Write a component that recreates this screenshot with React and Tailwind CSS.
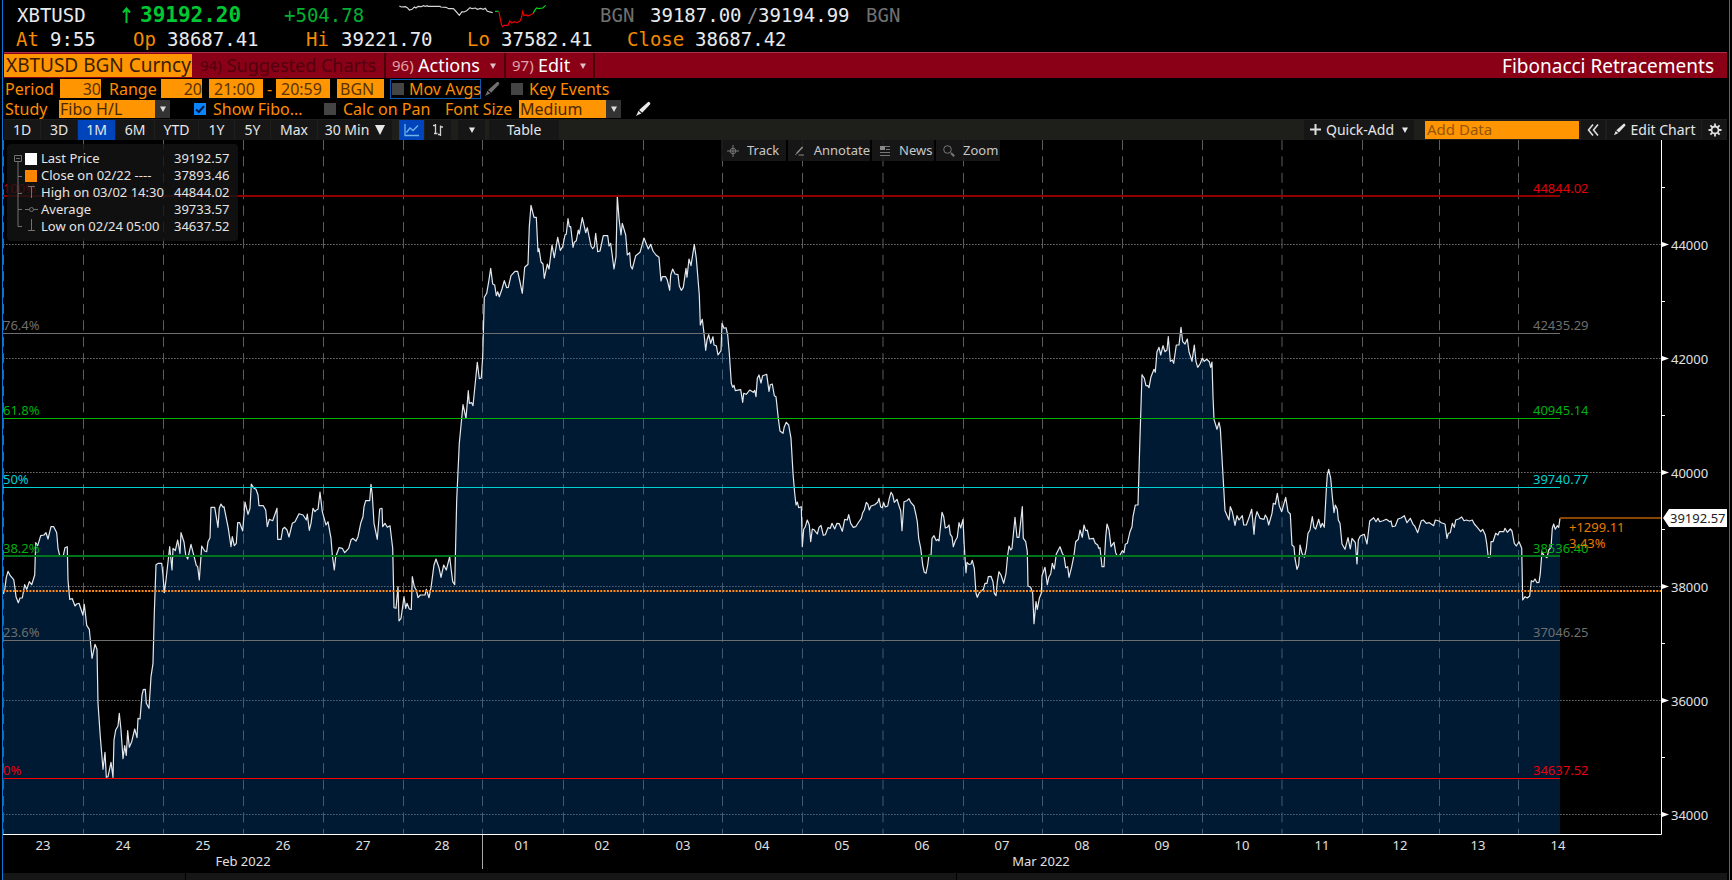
import React from "react";

const SEGMENTS = [
  {
    x: 0,
    y: 440,
    points:
      "10,462 14,450 19,412 24,394 31,407 41,419 45,445 48,470 55,488 60,474 67,474 74,434 80,448 88,425 95,434 104,405 107,308 113,317 122,287 132,285 138,278 144,297 153,260 161,260 170,278 174,325 179,347 190,347 195,323 202,320 204,420 209,478 217,476 225,498 230,492 237,490 249,526 253,493 260,556 268,568 276,655 285,613 291,628 294,790 301,890 309,988 315,937 319,1012 324,1010 333,967 339,1012 342,900 347,870 354,858 358,820 363,870 369,956 374,917 379,946 383,872 388,922 395,905 404,867 411,893 414,835 420,837 426,765 430,749 436,748 439,790 447,805 453,710 459,670 463,520 468,374 475,370 485,370 489,405 493,458 498,420 509,320 516,390 519,325 526,332 533,300 540,340 543,278 552,306 557,345 563,357 573,313 583,352 589,376 593,380 598,420 605,318 614,333 620,335 624,305 630,293 633,202 644,202 654,262 658,205 663,192 669,202 672,200 685,265 693,320 697,290 703,317 709,310 713,248 719,248 728,273 735,186 744,223 750,205 754,132 762,145 768,148 774,165 777,197 790,197 797,210 802,260 808,238 818,242 831,205 833,298 843,298 848,267 854,262 861,270 867,291 877,250 885,245 897,221 909,225 919,240 922,222 928,271 933,250 939,205 945,215 949,210 954,208 960,156 967,215 978,255 984,245 993,295 997,345 1003,390 1007,350 1017,323 1027,325 1034,338 1046,325 1053,300 1058,295 1068,303 1074,290 1082,250 1089,230 1092,200 1097,182 1109,182 1113,133 1117,165 1122,250 1132,298 1139,207 1146,205 1148,260 1155,250 1162,262 1170,257 1178,325 1182,503 1188,505 1194,440 1197,543 1203,535 1212,470 1217,505 1221,490 1228,507 1234,508 1237,410 1243,440 1249,450 1254,473 1261,465 1275,465 1279,448 1287,473 1293,443 1302,375",
  },
  {
    x: 430,
    y: 180,
    points:
      "18,1137 27,1163 33,1192 41,1155 49,1170 59,1130 63,1165 68,1205 74,1214 80,960 88,790 95,715 99,674 108,715 115,632 118,670 125,668 129,677 142,547 148,596 154,594 158,530 163,352 170,340 176,305 182,265 188,312 194,315 199,347 203,335 208,350 216,327 223,302 230,323 235,322 243,287 255,274 263,274 270,306 277,340 284,262 294,253 298,140 303,76 312,112 319,112 324,215 327,206 333,246 339,252 343,295 352,252 357,267 366,195 373,233 383,172 391,211 398,200 405,165 409,162 414,116 418,140 422,140 429,202 433,187 439,182 445,150 448,162 457,113 467,158 472,143 483,198 488,206 493,200 497,160 503,215 510,213 520,167 533,167 537,198 542,190 552,267 558,230 562,48 567,115 573,165 577,130 587,165 592,225 599,218 602,258 607,267 617,227 630,217 642,174 655,207 662,193 669,213 678,225 687,232 693,303 697,290 707,290 712,300 719,331 722,285 728,267 735,282 744,284 748,318 754,331 760,322 768,265 771,292 777,237 783,257 793,193 799,235 808,345 811,435 817,418 822,460 827,511 831,480 836,464 842,490 849,470 852,495 859,497 864,525 873,512 876,430 882,445 888,443 893,465 898,520 904,610 908,622 912,616 916,632 932,629 938,667 941,640 949,643 959,630 970,637 974,631 978,650 982,595 987,585 993,609 998,587 1010,583 1017,634 1021,614 1027,612 1033,647 1038,650 1045,715 1050,753 1059,760 1063,740 1069,727 1076,735 1083,775 1089,880 1094,940 1098,975 1102,966 1106,983 1114,980 1117,1100 1121,1048 1126,1040 1132,1020 1138,1035 1142,1085 1147,1047 1152,1049 1162,1062 1167,1042 1173,1036 1180,1066 1186,1064 1194,1043 1201,1045 1206,1030 1214,1047 1221,1030 1228,1031 1237,1054 1244,1018 1252,1020 1256,1004 1262,1030 1270,1042 1277,1040 1286,1026 1294,1015 1298,998 1303,990 1309,967 1314,973 1318,990",
  },
  {
    x: 860,
    y: 300,
    points:
      "33,618 44,614 53,607 57,595 62,621 67,623 71,608 76,621 83,618 88,595 93,577 98,585 103,607 111,598 118,620 122,632 126,692 132,605 141,602 147,596 153,608 162,618 168,645 172,665 176,715 182,745 188,795 193,817 198,820 203,795 207,765 213,767 216,715 222,707 229,722 233,718 237,723 246,637 251,650 256,684 262,682 267,675 271,703 276,710 280,740 286,722 292,712 297,668 302,684 309,658 313,740 318,818 321,787 327,793 333,792 337,781 343,805 348,880 352,892 358,878 370,868 375,850 381,850 385,830 393,829 399,845 403,880 408,887 412,845 417,815 423,825 431,850 438,820 443,765 447,738 452,750 456,745 465,652 471,712 477,712 487,620 490,715 497,725 502,755 504,858 512,862 518,880 522,971 528,905 532,928 538,895 544,880 546,827 555,802 562,854 567,830 572,822 577,790 583,807 589,762 600,740 607,760 612,768 617,803 623,800 627,832 635,800 642,765 647,725 655,718 660,690 667,712 672,675 677,692 682,690 688,717 700,715 706,730 713,735 716,745 720,743 726,800 732,800 737,712 741,672 747,690 753,740 762,727 767,758 772,768 780,765 787,752 792,758 796,733 802,730 810,695 816,680 819,650 826,615 834,615 839,440 846,224 853,235 858,257 863,257 867,263 873,230 882,208 886,217 891,155 897,142 902,165 909,137 915,155 921,150 925,110 931,184 937,180 941,190 949,135 957,135 963,82 968,125 975,132 982,117 987,155 996,184 1003,135 1008,185 1013,202 1020,192 1027,175 1033,184 1040,178 1048,185 1052,202 1056,186 1059,290 1062,358 1067,375 1071,388 1077,367 1081,385 1087,490 1095,632 1107,660 1111,620 1117,635 1125,676 1131,647 1137,660 1147,647 1151,675 1159,675 1168,650 1175,628 1182,703 1186,655 1191,635 1200,655 1212,658 1216,645 1221,653 1226,675 1236,640 1240,610 1246,613 1252,580 1258,617 1265,635 1277,592 1284,635 1291,642 1296,735 1302,740 1305,775 1311,808",
  },
  {
    x: 1292,
    y: 440,
    points:
      "20,375 24,315 30,340 37,352 43,325 48,280 54,270 61,230 66,262 71,267 80,238 86,262 91,250 97,262 103,150 106,105 110,88 116,115 121,170 126,218 130,195 136,208 139,240 144,250 150,312 159,328 168,293 175,327 180,295 190,308 195,372 199,300 205,288 217,283 225,312 233,243 245,233 252,245 258,235 263,245 273,242 283,238 293,245 297,243 301,260 310,258 318,237 327,234 337,227 345,248 355,235 363,253 368,258 377,278 388,242 394,240 403,250 412,248 425,257 430,240 441,243 448,248 459,252 465,295 469,280 475,278 481,250 487,262 491,240 500,237 509,231 516,242 523,240 532,243 541,240 547,252 556,262 566,275 572,268 580,285 584,310 589,352 595,350 597,305 603,305 611,280 618,285 622,275 635,275 639,265 646,277 655,267 660,273 667,310 673,318 681,305 689,325 692,480 699,470 706,474 713,468 718,422 724,425 729,417 735,428 741,427 745,400 750,335 755,345 765,353 770,330 777,322 781,265 785,252 790,268 796,257 800,262 804,235",
  },
];

// Segment samples are stored in thirds of a chart unit.
const price = SEGMENTS.flatMap((s) =>
  s.points.split(" ").map((p) => {
    const [px, py] = p.split(",").map(Number);
    return `${(s.x + px / 3).toFixed(1)},${(s.y + py / 3).toFixed(1)}`;
  })
).join(" ");

const DAY_LINES = [3.5, 83.5, 163.5, 243.5, 323.5, 403.5, 482.5, 563.5, 643.5, 722.5, 802.5, 883, 963.5, 1042.5, 1122.5, 1202.5, 1282, 1362.5, 1439.5, 1518.5];
const DAYS = [
  ["23", 43], ["24", 123], ["25", 203], ["26", 283], ["27", 363], ["28", 442], ["01", 522], ["02", 602], ["03", 683], ["04", 762],
  ["05", 842], ["06", 922], ["07", 1002], ["08", 1082], ["09", 1162], ["10", 1242], ["11", 1322], ["12", 1400], ["13", 1478], ["14", 1558],
];
const MAJOR = [["44000", 244.5], ["42000", 358.5], ["40000", 472.5], ["38000", 586.5], ["36000", 700.5], ["34000", 814.5]];
const MINOR = [187.5, 301.5, 415.5, 529.5, 643.5, 757.5];
const FIBS = [
  { pct: "100%", value: "44844.02", y: 196, w: 2, line: "#8f0000", text: "#e0000c" },
  { pct: "76.4%", value: "42435.29", y: 333.5, w: 1, line: "#6e6e6e", text: "#6e6e6e" },
  { pct: "61.8%", value: "40945.14", y: 418.5, w: 1, line: "#00b400", text: "#00b010" },
  { pct: "50%", value: "39740.77", y: 487.5, w: 1, line: "#00d0d0", text: "#00d0d0" },
  { pct: "38.2%", value: "38536.40", y: 556, w: 2, line: "#00751c", text: "#00b010" },
  { pct: "23.6%", value: "37046.25", y: 640.5, w: 1, line: "#6e6e6e", text: "#6e6e6e" },
  { pct: "0%", value: "34637.52", y: 778.5, w: 1, line: "#ff0000", text: "#e8000c" },
];

function Chart() {
  return (
    <svg viewBox="3 140 1726 733" className="block h-auto w-full" fontFamily='"Noto Sans", sans-serif' fontSize="13" role="img" aria-label="XBTUSD price chart">
      {MAJOR.map(([t, y]) => (
        <line key={t} x1="3" x2="1661" y1={y} y2={y} stroke="#666" strokeDasharray="1.7 1.3" />
      ))}
      {DAY_LINES.map((x) => (
        <line key={x} x1={x} x2={x} y1="140" y2="834" stroke="#5c5c5c" strokeDasharray="10 6.4" />
      ))}
      <polygon points={`3.3,834 ${price} 1560,834`} fill="#0057aa" fillOpacity=".3" />
      <polyline points={price} fill="none" stroke="#e4e8ec" strokeWidth="1.2" strokeLinejoin="round" />
      {FIBS.map((f) => (
        <g key={f.pct}>
          <line x1="3" x2="1560" y1={f.y} y2={f.y} stroke={f.line} strokeWidth={f.w} shapeRendering="crispEdges" />
          <text x="3" y={Math.floor(f.y) - 3} fill={f.text}>{f.pct}</text>
          <text x="1533" y={Math.floor(f.y) - 3} fill={f.text}>{f.value}</text>
        </g>
      ))}
      <line x1="3" x2="1661" y1="591" y2="591" stroke="#ff8c1a" strokeWidth="2" strokeDasharray="2 1.3" />
      <line x1="1560" x2="1661" y1="518" y2="518" stroke="#8a4600" strokeWidth="2" />
      <text x="1569" y="532" fill="#e87a00">+1299.11</text>
      <text x="1569" y="548" fill="#e87a00">3.43%</text>
      <path d="M3 834.5H1661.500V140" fill="none" stroke="#fff" />
      <line x1="482.500" x2="482.500" y1="835" y2="869" stroke="#aaa" />
      {MINOR.map((y) => (
        <line key={y} x1="1662" x2="1665" y1={y} y2={y} stroke="#fff" />
      ))}
      {MAJOR.map(([t, y]) => (
        <g key={t}>
          <path d={`M1662 ${y - 2.5}L1669 ${y}L1662 ${y + 2.5}Z`} fill="#fff" />
          <text x="1671" y={y + 5} fill="#e0e0e0">{t}</text>
        </g>
      ))}
      <path d="M1663 518L1669 509H1727V527H1669Z" fill="#fff" />
      <text x="1670" y="523" fill="#222">39192.57</text>
      <g fill="#e0e0e0" textAnchor="middle">
        {DAYS.map(([d, x]) => (
          <text key={d} x={x} y="850">{d}</text>
        ))}
        <text x="243" y="866">Feb 2022</text>
        <text x="1041" y="866">Mar 2022</text>
      </g>
    </svg>
  );
}

function Caret({ className = "" }) {
  return (
    <svg viewBox="0 0 6 6" className={`h-[6px] w-[6px] shrink-0 ${className}`} fill="currentColor" aria-hidden="true">
      <path d="M0 .5h6L3 6z" />
    </svg>
  );
}

function Pencil({ className = "" }) {
  return (
    <svg viewBox="0 0 16 16" className={`shrink-0 ${className}`} fill="currentColor" aria-hidden="true">
      <path d="M12.800 1.200a1.300 1.300 0 0 1 1.800 0l.4.5a1.300 1.300 0 0 1 0 1.700L7.200 11.800 4.100 8.900zM3.400 9.700l3 2.900L2.800 14 1 15.200 2.100 13z" />
    </svg>
  );
}

function Sparkline() {
  return (
    <svg viewBox="27 3 444 75" className="h-[25px] w-[148px]" fill="none" strokeWidth="3.500" aria-hidden="true">
      <path stroke="#d4d4d4" d="M28 12L34 15 46 14 52 17 58 24 66 22 73 15 78 18 84 13 94 14 100 11 106 13 112 11 114 13 150 13 152 15 168 16 176 20 190 20 197 27 208 40 216 29 222 30 230 26 240 17 246 20 256 18 262 22 272 19 280 22 286 19 292 28 308 32" />
      <path stroke="#00d91a" d="M315 28H326" />
      <path stroke="#f00000" d="M327 29L330 48 335 70 338 74 342 70 354 70 359 57 365 63 372 59 380 62 390 57 395 45 398 29 402 41 410 39 414 42 422 38 430 34" />
      <path stroke="#00d91a" d="M430 34L434 25 440 18 446 20 458 18 467 10" />
    </svg>
  );
}

function Select({ id, value, className }) {
  return (
    <span className={`relative flex h-[18px] ${className}`}>
      <select id={id} defaultValue={value} className="h-full w-full appearance-none rounded-none border-0 bg-[#ff9500] p-0 pl-px text-base leading-[18px] text-[#4a2800] outline-none">
        <option>{value}</option>
      </select>
      <span className="pointer-events-none absolute inset-y-0 right-0 flex w-[15px] items-center justify-center bg-[#333] text-[#ddd]">
        <Caret />
      </span>
    </span>
  );
}

function Check({ label, checked = false, gap }) {
  return (
    <label className={`flex items-center whitespace-nowrap ${gap}`}>
      <span className="relative flex h-3 w-3 shrink-0">
        <input type="checkbox" defaultChecked={checked} className="peer h-3 w-3 appearance-none bg-[#444] checked:bg-[#0a84ff]" />
        <svg viewBox="0 0 12 12" className="pointer-events-none absolute inset-0 hidden h-3 w-3 peer-checked:block" fill="none" stroke="#001a40" strokeWidth="2" aria-hidden="true">
          <path d="M2 6.500L4.800 9 10 3.200" />
        </svg>
      </span>
      {label}
    </label>
  );
}

const field = "h-[19px] rounded-none border-0 bg-[#ff9500] p-0 text-base text-[#5a3300] outline-none";
const tabBase = "flex h-[20px] shrink-0 items-center justify-center text-[14px] text-[#e6e6e6]";
const tab = `${tabBase} bg-[#161616]`;
const tabOn = `${tabBase} bg-[#0044bb]`;
const tool = "flex h-[21px] items-center bg-[#181818]/90 text-[13px] text-[#c8c8c8]";

const RANGES = [
  ["1D", "w-[36px]"], ["3D", "w-[36px]"], ["1M", "w-[37px]"], ["6M", "w-[38px]"],
  ["YTD", "w-[43px]"], ["1Y", "w-[35px]"], ["5Y", "w-[35px]"], ["Max", "w-[46px]"],
];

const LEGEND = [
  ["Last Price", "39192.57"],
  ["Close on 02/22 ----", "37893.46"],
  ["High on 03/02 14:30", "44844.02"],
  ["Average", "39733.57"],
  ["Low on 02/24 05:00", "34637.52"],
];

function Legend() {
  return (
    <div className="absolute left-1 top-1 flex rounded bg-[#141414]/80 py-[6px] pl-[7px] pr-2">
      <svg viewBox="0 0 26 85" className="h-[85px] w-[26px]" fill="none" stroke="#707070" aria-hidden="true">
        <path d="M.5 5.500h7v6h-7zM2 8.500h4M4 11.500V76.500h4M4 26.500h4M4 43.500h4M4 59.500h4M14 36.500h7M17.500 37v11M11 59.500h13M17.500 69v11M14 80.500h7" />
        <circle cx="17.500" cy="59.500" r="2" fill="#121212" />
        <path d="M11 3h12v12H11z" fill="#fff" stroke="none" />
        <path d="M11 20h12v12H11z" fill="#ff8400" stroke="none" />
      </svg>
      <table className="text-[13px] leading-[17px] text-[#e4e4e4]">
        <tbody>
          {LEGEND.map(([k, v]) => (
            <tr key={k}>
              <th scope="row" className="w-[134px] whitespace-nowrap p-0 pl-px text-left font-normal">{k}</th>
              <td className="p-0">{v}</td>
            </tr>
          ))}
        </tbody>
      </table>
    </div>
  );
}

export default function App() {
  return (
    <div className="min-h-screen bg-black px-[2px] font-['Noto_Sans',sans-serif] text-base">
      <div className="min-h-screen border-x border-[#0a78d8]">
        <header className="pl-[13px] pt-[3px] font-['DejaVu_Sans_Mono',monospace] text-[19px] whitespace-nowrap text-[#e8eaee]">
          <div className="flex h-6 items-center pl-px">
            <h1 className="w-[105px]">XBTUSD</h1>
            <svg viewBox="0 0 9 16" className="mr-[9px] h-4 w-[9px]" fill="none" stroke="#00c832" strokeWidth="2" role="img" aria-label="Up">
              <path d="M4.500 16V2M1 5.500L4.500 1.500 8 5.500" />
            </svg>
            <span className="w-[144px] text-[21px] leading-6 font-bold text-[#00c832]">39192.20</span>
            <span className="w-[115px] text-[#00b030]">+504.78</span>
            <span className="w-[201px]"><Sparkline /></span>
            <span className="w-[50px] text-[#707070]">BGN</span>
            <span className="w-[97px]">39187.00</span>
            <span className="w-[11px] text-[#909090]">/</span>
            <span className="w-[108px]">39194.99</span>
            <span className="text-[#707070]">BGN</span>
          </div>
          <div className="flex h-[25px] items-center">
            <span className="w-[34px] text-[#f58a00]">At</span>
            <span className="w-[83px]">9:55</span>
            <span className="w-[34px] text-[#f58a00]">Op</span>
            <span className="w-[139px]">38687.41</span>
            <span className="w-[35px] text-[#f58a00]">Hi</span>
            <span className="w-[126px]">39221.70</span>
            <span className="w-[34px] text-[#f58a00]">Lo</span>
            <span className="w-[126px]">37582.41</span>
            <span className="w-[68px] text-[#f58a00]">Close</span>
            <span>38687.42</span>
          </div>
        </header>

        <div className="ml-px mr-[2px] flex h-[26px] items-stretch border-t border-[#a83048] bg-[#8a0016] text-[18px] whitespace-nowrap text-white">
          <input aria-label="Security" defaultValue="XBTUSD BGN Curncy" className="my-px w-[188px] rounded-none border-0 bg-[#ff9500] p-0 pl-[2px] text-[19px] text-[#3a1c00] outline-none" />
          <button className="flex w-[194px] items-center gap-[5px] border-r-2 border-[#4a000c] pl-2 text-[#50000f]">
            <span className="text-[15px]">94)</span>Suggested Charts
          </button>
          <button className="flex w-[120px] items-center border-r-2 border-[#4a000c] pl-[6px]">
            <span className="w-[26px] text-left text-[15px] text-[#e0a0a8]">96)</span>Actions
            <Caret className="ml-[10px] text-[#e0c0c8]" />
          </button>
          <button className="flex w-[89px] items-center border-r-2 border-[#4a000c] pl-[6px]">
            <span className="w-[26px] text-left text-[15px] text-[#e0a0a8]">97)</span>Edit
            <Caret className="ml-[10px] text-[#e0c0c8]" />
          </button>
          <h2 className="ml-auto self-center pr-[13px] text-[19px] leading-6">Fibonacci Retracements</h2>
        </div>

        <div className="flex h-[21px] items-center pl-[2px] whitespace-nowrap text-[#ff8c00]">
          <label htmlFor="period" className="w-[55px]">Period</label>
          <input id="period" defaultValue="30" className={`${field} w-[41px] text-right`} />
          <label htmlFor="range" className="ml-[8px] w-[52px]">Range</label>
          <input id="range" defaultValue="20" className={`${field} w-[41px] text-right`} />
          <input aria-label="From time" defaultValue="21:00" className={`${field} ml-[7px] w-[54px] pl-[5px]`} />
          <span className="w-[13px] text-center">-</span>
          <input aria-label="To time" defaultValue="20:59" className={`${field} w-[54px] pl-[5px]`} />
          <input aria-label="Source" defaultValue="BGN" className={`${field} ml-[7px] w-[47px] pl-[3px]`} />
          <div className="ml-[6px] flex h-5 w-[91px] items-center border border-[#0a58b0] pl-px">
            <Check label="Mov Avgs" gap="gap-[5px]" />
          </div>
          <button aria-label="Edit moving averages" className="ml-[3px] text-[#707070]"><Pencil className="h-4 w-4" /></button>
          <div className="ml-[11px]"><Check label="Key Events" gap="gap-[6px]" /></div>
        </div>

        <div className="flex h-[20px] items-center pl-[2px] whitespace-nowrap text-[#ff8c00]">
          <label htmlFor="study" className="w-[54px]">Study</label>
          <Select id="study" value="Fibo H/L" className="w-[111px]" />
          <div className="ml-[24px] w-[130px]"><Check label="Show Fibo..." checked gap="gap-[7px]" /></div>
          <div className="w-[121px]"><Check label="Calc on Pan" gap="gap-[7px]" /></div>
          <label htmlFor="size" className="w-[74px]">Font Size</label>
          <Select id="size" value="Medium" className="w-[102px]" />
          <button aria-label="Edit style" className="ml-[14px] text-[#e8e8e8]"><Pencil className="h-4 w-4" /></button>
        </div>

        <div className="ml-px mr-[2px] flex h-[21px] items-center gap-px bg-[#1e1e1a] whitespace-nowrap">
          {RANGES.map(([t, w]) => (
            <button key={t} className={`${t === "1M" ? tabOn : tab} ${w}`}>{t}</button>
          ))}
          <button className={`${tab} w-[74px] gap-[6px]`}>
            30 Min
            <svg viewBox="0 0 10 10" className="h-[10px] w-[10px]" fill="currentColor" aria-hidden="true"><path d="M0 0h10L5 10z" /></svg>
          </button>
          <button aria-label="Line chart" className={`${tabOn} ml-[6px] w-[25px]`}>
            <svg viewBox="0 0 16 14" className="h-[14px] w-[16px]" fill="none" stroke="#6fb4e8" strokeWidth="1.300" aria-hidden="true">
              <path d="M1 1v11.500h14M2.500 9.500L6 5l3 2.500L14 2.500" />
            </svg>
          </button>
          <button aria-label="Bar chart" className={`${tab} w-[26px]`}>
            <svg viewBox="0 0 12 14" className="h-[14px] w-[12px]" fill="none" stroke="#d0d0d0" strokeWidth="1.300" aria-hidden="true">
              <path d="M3.500 1v10M1 2.500h2.500M2 10.500h3.500M8.500 2.500V13M6 11.500h2.500M8.500 4H11" />
            </svg>
          </button>
          <button aria-label="More chart types" className={`${tab} ml-[6px] w-[27px]`}><Caret /></button>
          <button className={`${tab} ml-[3px] w-[70px]`}>Table</button>
          <div className="ml-auto flex items-center">
            <button className={`${tab} w-[110px] gap-[5px]`}>
              <svg viewBox="0 0 11 11" className="h-[11px] w-[11px]" stroke="#ddd" strokeWidth="2" aria-hidden="true"><path d="M5.500 0v11M0 5.500h11" /></svg>
              Quick-Add
              <Caret className="ml-[3px]" />
            </button>
            <input aria-label="Add Data" placeholder="Add Data" className="ml-[11px] h-[18px] w-[154px] rounded-none border-0 bg-[#ff9500] p-0 pl-[2px] text-[15px] text-[#5a3300] outline-none placeholder:text-[#94560a]" />
            <button aria-label="Collapse" className={`${tab} ml-[2px] w-[24px]`}>
              <svg viewBox="0 0 12 12" className="h-3 w-3" fill="none" stroke="#ddd" strokeWidth="1.600" aria-hidden="true"><path d="M6 .5L1.500 6 6 11.500M11 .5L6.500 6 11 11.500" /></svg>
            </button>
            <button className={`${tab} ml-[2px] w-[94px] gap-[5px]`}><Pencil className="h-[13px] w-[13px]" />Edit Chart</button>
            <button aria-label="Settings" className={`${tab} ml-px w-[25px]`}>
              <svg viewBox="0 0 14 14" className="h-[14px] w-[14px]" fill="none" stroke="#ddd" aria-hidden="true">
                <circle cx="7" cy="7" r="3.500" strokeWidth="1.800" />
                <path strokeWidth="1.800" d="M7 .5v3M7 10.500v3M.5 7h3M10.500 7h3M2.400 2.400l2.100 2.100M9.500 9.500l2.100 2.100M2.400 11.600l2.100-2.100M9.500 4.500l2.100-2.100" />
              </svg>
            </button>
          </div>
        </div>

        <main className="relative">
          <Chart />
          <Legend />
          <div className="absolute left-[718px] top-0 flex gap-[2px]">
            <button className={`${tool} w-[65px] gap-2 pl-[6px]`}>
              <svg viewBox="0 0 12 12" className="h-3 w-3" fill="none" stroke="#777" aria-hidden="true"><path d="M6 0v12M0 6h12" /><circle cx="6" cy="6" r="2.800" /></svg>
              Track
            </button>
            <button className={`${tool} w-[82px] gap-2 pl-[7px]`}>
              <svg viewBox="0 0 12 12" className="h-3 w-3" fill="none" stroke="#999" aria-hidden="true"><path strokeWidth="1.500" d="M2 8.500L8.500 1.500" /><path d="M4 10.500h6M.5 10.500L2 8.500" /></svg>
              Annotate
            </button>
            <button className={`${tool} w-[62px] gap-[9px] pl-2`}>
              <svg viewBox="0 0 10 10" className="h-[10px] w-[10px]" fill="none" stroke="#777" aria-hidden="true"><path d="M0 .5h10M6 3.500h4M0 6.500h10M0 9.500h10" /><path d="M0 0h5v4H0z" fill="#888" stroke="none" /></svg>
              News
            </button>
            <button className={`${tool} w-[64px] gap-[8px] pl-[7px]`}>
              <svg viewBox="0 0 12 12" className="h-3 w-3" fill="none" stroke="#777" aria-hidden="true"><circle cx="4.500" cy="4.500" r="3.800" /><path strokeWidth="2" d="M8 8l3.200 3.200" /></svg>
              Zoom
            </button>
          </div>
        </main>
        <footer className="mr-[2px] flex h-[7px] gap-px">
          <div className="w-[182px] bg-[#161616]" />
          <div className="w-[770px] bg-[#161616]" />
          <div className="flex-1 bg-[#161616]" />
        </footer>
      </div>
    </div>
  );
}
